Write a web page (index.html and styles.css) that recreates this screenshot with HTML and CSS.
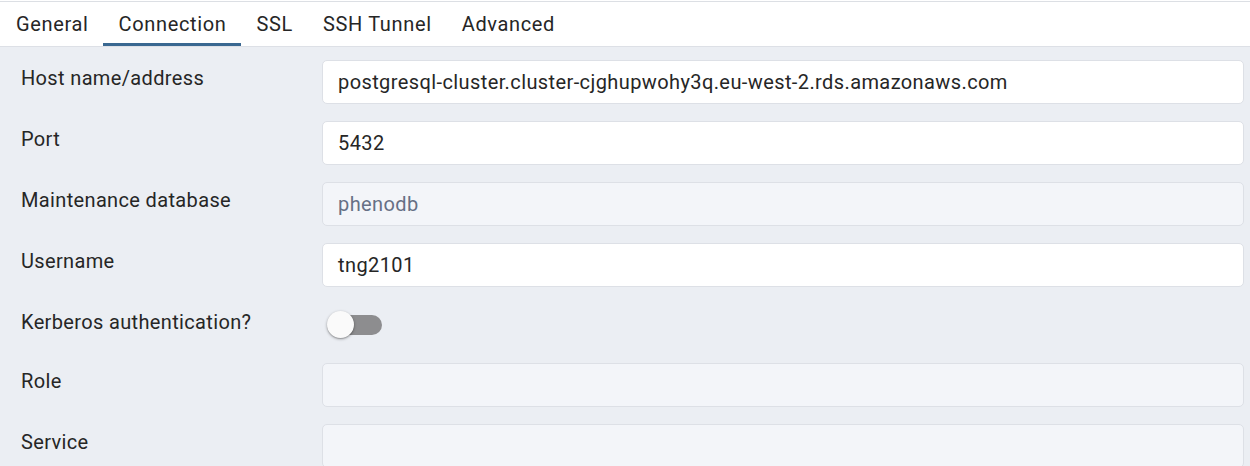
FILE: index.html
```html
<!DOCTYPE html>
<html>
<head>
<meta charset="utf-8">
<link rel="stylesheet" href="styles.css">
</head>
<body>
<div class="topline"></div>
<nav class="tabs">
  <div class="tab">General</div>
  <div class="tab active">Connection</div>
  <div class="tab">SSL</div>
  <div class="tab">SSH Tunnel</div>
  <div class="tab">Advanced</div>
</nav>
<div class="form">
  <div class="label">Host name/address</div>
  <div class="field">postgresql-cluster.cluster-cjghupwohy3q.eu-west-2.rds.amazonaws.com</div>

  <div class="label">Port</div>
  <div class="field">5432</div>

  <div class="label">Maintenance database</div>
  <div class="field disabled">phenodb</div>

  <div class="label">Username</div>
  <div class="field">tng2101</div>

  <div class="label">Kerberos authentication?</div>
  <div class="switch-row">
    <div class="switch">
      <span class="track"></span>
      <span class="knob"></span>
    </div>
  </div>

  <div class="label">Role</div>
  <div class="field disabled"></div>

  <div class="label">Service</div>
  <div class="field disabled"></div>
</div>
</body>
</html>
```
FILE: styles.css
```css
html, body {
  margin: 0;
  padding: 0;
  background: #ffffff;
  font-family: Roboto, "Liberation Sans", sans-serif;
  color: #222222;
  height: 466px;
  overflow: hidden;
}

.topline {
  height: 1px;
  margin-top: 1px;
  background: #dcdfe4;
}

.tabs {
  display: flex;
  height: 44px;
  border-bottom: 1px solid #dde0e6;
  background: #ffffff;
}

.tab {
  display: flex;
  align-items: center;
  padding: 2px 14px 0 16px;
  font-size: 20px;
  letter-spacing: 0.65px;
  color: #262626;
  box-sizing: border-box;
  border-bottom: 3px solid transparent;
}

.tab.active {
  border-bottom-color: #3a6891;
}

.form {
  background: #ebeef3;
  display: grid;
  grid-template-columns: 301px 1fr;
  row-gap: 17px;
  padding: 13px 6px 40px 21px;
}

.label {
  font-size: 20px;
  letter-spacing: 0.35px;
  line-height: 26px;
  margin-top: 5px;
  color: #262626;
}

.field {
  height: 44px;
  box-sizing: border-box;
  border: 1px solid #dde0e6;
  border-radius: 5px;
  background: #ffffff;
  padding: 0 15px;
  display: flex;
  align-items: center;
  font-size: 20px;
  letter-spacing: 0.4px;
  color: #262626;
}

.field.disabled {
  background: #f3f5f9;
  color: #667085;
}

.switch-row {
  height: 42px;
  display: flex;
  align-items: center;
}

.switch {
  position: relative;
  width: 62px;
  height: 42px;
}

.track {
  position: absolute;
  left: 11px;
  top: 11px;
  width: 49px;
  height: 20px;
  border-radius: 10px;
  background: #8d8d8f;
}

.knob {
  position: absolute;
  left: 5px;
  top: 7px;
  width: 27px;
  height: 27px;
  border-radius: 50%;
  background: #fafafa;
  box-shadow: 0 1px 3px rgba(0, 0, 0, 0.35), 0 1px 1px rgba(0, 0, 0, 0.14);
}
```
